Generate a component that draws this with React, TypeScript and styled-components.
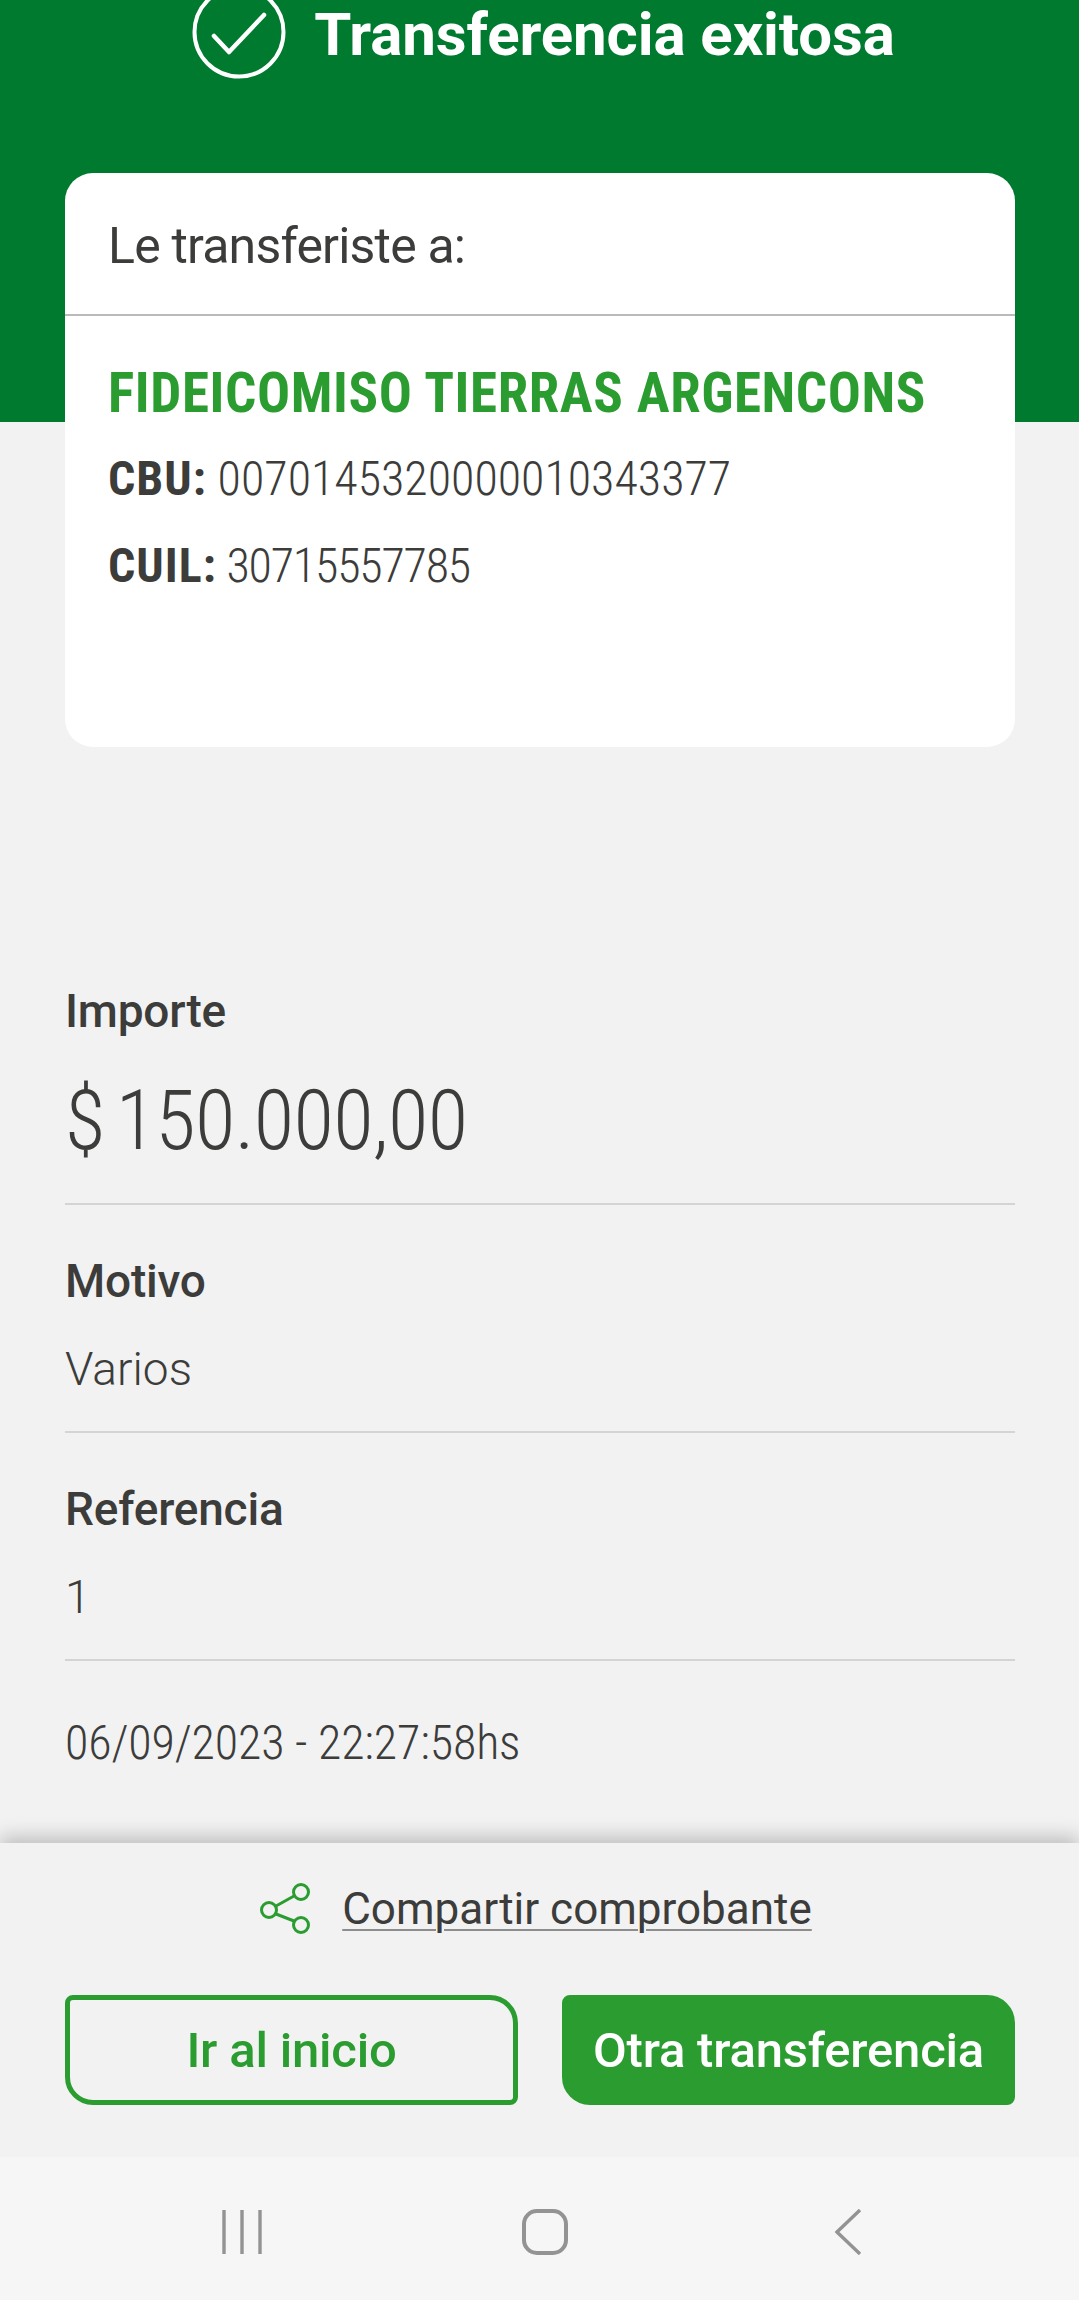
import styled, { createGlobalStyle } from "styled-components";

const GlobalStyle = createGlobalStyle`
  html, body {
    margin: 0;
    padding: 0;
    background: #f2f2f2;
  }
  #root {
    height: 2300px;
    overflow: hidden;
  }
`;

const FONT = `Roboto, "Liberation Sans", sans-serif`;

const Page = styled.div`
  width: 1079px;
  height: 2300px;
  display: flex;
  flex-direction: column;
  font-family: ${FONT};
  color: #3c3c3b;
  background: #f2f2f2;
  overflow: hidden;
`;

const Scroll = styled.main`
  flex: 1;
  min-height: 0;
  overflow: hidden;
`;

const Header = styled.header`
  height: 437px;
  background: #007a2f;
  display: flex;
  justify-content: center;
  align-items: flex-start;
  gap: 28px;
  margin-top: -15px;
  padding-left: 8px;
  box-sizing: border-box;
`;

const CheckIcon = styled.svg`
  width: 94px;
  height: 94px;
  flex: none;
`;

const Title = styled.h1`
  margin: 15px 0 0;
  font-size: 60px;
  line-height: 70px;
  font-weight: 700;
  letter-spacing: -0.1px;
  color: #fff;
`;

const Card = styled.section`
  margin: -249px 64px 0 65px;
  height: 574px;
  background: #fff;
  border-radius: 28px;
  position: relative;
`;

const CardTop = styled.div`
  height: 143px;
  box-sizing: border-box;
  padding: 45px 43px 0;
  border-bottom: 2px solid #bababa;
  font-size: 50px;
  line-height: 56px;
  font-weight: 400;
  letter-spacing: -0.8px;
`;

const CardBody = styled.div`
  padding: 46px 43px 0;
`;

const Payee = styled.div`
  font-size: 55px;
  line-height: 62px;
  font-weight: 700;
  font-stretch: semi-condensed;
  letter-spacing: 0.6px;
  white-space: nowrap;
  color: #2a9c30;
`;

const IdRow = styled.div<{ $top: number; $tracking: number }>`
  margin-top: ${(p) => p.$top}px;
  font-size: 48px;
  line-height: 52px;
  font-weight: 300;
  font-stretch: semi-condensed;
  letter-spacing: ${(p) => p.$tracking}px;

  b {
    font-weight: 700;
    letter-spacing: 1px;
  }
`;

const Details = styled.div`
  margin: 0 64px 0 65px;
  padding-top: 238px;
`;

const Field = styled.div<{ $height: number }>`
  border-bottom: 2px solid #d4d4d4;
  height: ${(p) => p.$height}px;
  box-sizing: border-box;
`;

const Label = styled.div<{ $top?: number }>`
  padding-top: ${(p) => p.$top ?? 0}px;
  font-size: 46px;
  line-height: 52px;
  font-weight: 500;
  letter-spacing: -0.2px;
`;

const Value = styled.div`
  margin-top: 35px;
  font-size: 46px;
  line-height: 54px;
  font-weight: 300;
`;

const Amount = styled.div`
  margin-top: 38px;
  font-size: 83px;
  line-height: 92px;
  font-weight: 300;
  font-stretch: semi-condensed;
  letter-spacing: -0.7px;
  word-spacing: -7px;
`;

const Timestamp = styled.div`
  margin-top: 57px;
  font-size: 48px;
  line-height: 50px;
  font-weight: 300;
  font-stretch: semi-condensed;
  letter-spacing: -0.15px;
`;

const Footer = styled.footer`
  height: 314px;
  flex: none;
  box-sizing: border-box;
  padding: 34px 64px 0 65px;
  background: #f2f2f2;
  box-shadow: 0 -6px 18px rgba(0, 0, 0, 0.22);
  position: relative;
`;

const ShareRow = styled.a`
  display: flex;
  justify-content: center;
  align-items: center;
  gap: 30px;
  height: 64px;
  padding-right: 8px;
  color: #3c3c3b;
`;

const ShareIcon = styled.svg`
  width: 52px;
  height: 54px;
  flex: none;
`;

const ShareText = styled.span`
  font-size: 44px;
  line-height: 52px;
  font-weight: 400;
  text-decoration: underline;
  text-decoration-thickness: 2px;
  text-underline-offset: 5px;
  text-decoration-color: #8d8d8d;
`;

const Buttons = styled.div`
  margin-top: 54px;
  display: grid;
  grid-template-columns: 453px 453px;
  justify-content: space-between;
`;

const Button = styled.button<{ $solid?: boolean }>`
  height: 110px;
  box-sizing: border-box;
  padding: 0;
  border: 5px solid #2a9c30;
  border-radius: 8px 28px 8px 28px;
  background: ${(p) => (p.$solid ? "#2a9c30" : "transparent")};
  color: ${(p) => (p.$solid ? "#fff" : "#2a9c30")};
  font-family: ${FONT};
  font-size: 49px;
  font-weight: 500;
  letter-spacing: -0.2px;
`;

const NavBar = styled.nav`
  height: 143px;
  flex: none;
  position: relative;
  background: #f6f6f6;
  display: grid;
  grid-template-columns: 222px 40px 260px 46px 267px 27px;
  padding-top: 52px;
  box-sizing: border-box;
`;

const NavIcon = styled.svg<{ $col: number }>`
  grid-column: ${(p) => p.$col};
  height: 46px;
  width: 100%;
  stroke: #939393;
  fill: none;
`;

export default function App() {
  return (
    <Page>
      <GlobalStyle />
      <Scroll>
        <Header>
          <CheckIcon viewBox="0 0 94 94">
            <circle cx="47" cy="47" r="44.5" fill="none" stroke="#fff" strokeWidth="4" />
            <path d="M22 51 L37 67 L72 30" fill="none" stroke="#fff" strokeWidth="4.5" strokeLinecap="round" strokeLinejoin="round" />
          </CheckIcon>
          <Title>Transferencia exitosa</Title>
        </Header>
        <Card>
          <CardTop>Le transferiste a:</CardTop>
          <CardBody>
            <Payee>FIDEICOMISO TIERRAS ARGENCONS</Payee>
            <IdRow $top={29} $tracking={0}>
              <b>CBU:</b> 0070145320000010343377
            </IdRow>
            <IdRow $top={35} $tracking={-1.2}>
              <b>CUIL:</b> 30715557785
            </IdRow>
          </CardBody>
        </Card>
        <Details>
          <Field $height={220}>
            <Label>Importe</Label>
            <Amount>$ 150.000,00</Amount>
          </Field>
          <Field $height={228}>
            <Label $top={50}>Motivo</Label>
            <Value>Varios</Value>
          </Field>
          <Field $height={228}>
            <Label $top={50}>Referencia</Label>
            <Value>1</Value>
          </Field>
          <Timestamp>06/09/2023 - 22:27:58hs</Timestamp>
        </Details>
      </Scroll>
      <Footer>
        <ShareRow>
          <ShareIcon viewBox="0 0 52 54" fill="none" stroke="#2a9c30" strokeWidth="3">
            <circle cx="41" cy="10" r="7.5" />
            <circle cx="41" cy="43" r="7.5" />
            <circle cx="9" cy="28" r="7.5" />
            <path d="M16 24 L34 14 M16 32 L34 39" />
          </ShareIcon>
          <ShareText>Compartir comprobante</ShareText>
        </ShareRow>
        <Buttons>
          <Button>Ir al inicio</Button>
          <Button $solid>Otra transferencia</Button>
        </Buttons>
      </Footer>
      <NavBar>
        <NavIcon $col={2} viewBox="0 0 40 46" strokeWidth="3.4">
          <path d="M2 1 V45 M20 1 V45 M38 1 V45" />
        </NavIcon>
        <NavIcon $col={4} viewBox="0 0 46 46" strokeWidth="4">
          <rect x="2" y="2" width="42" height="42" rx="13" />
        </NavIcon>
        <NavIcon $col={6} viewBox="0 0 27 46" strokeWidth="3.4">
          <path d="M25 1 L2 23 L25 45" />
        </NavIcon>
      </NavBar>
    </Page>
  );
}
